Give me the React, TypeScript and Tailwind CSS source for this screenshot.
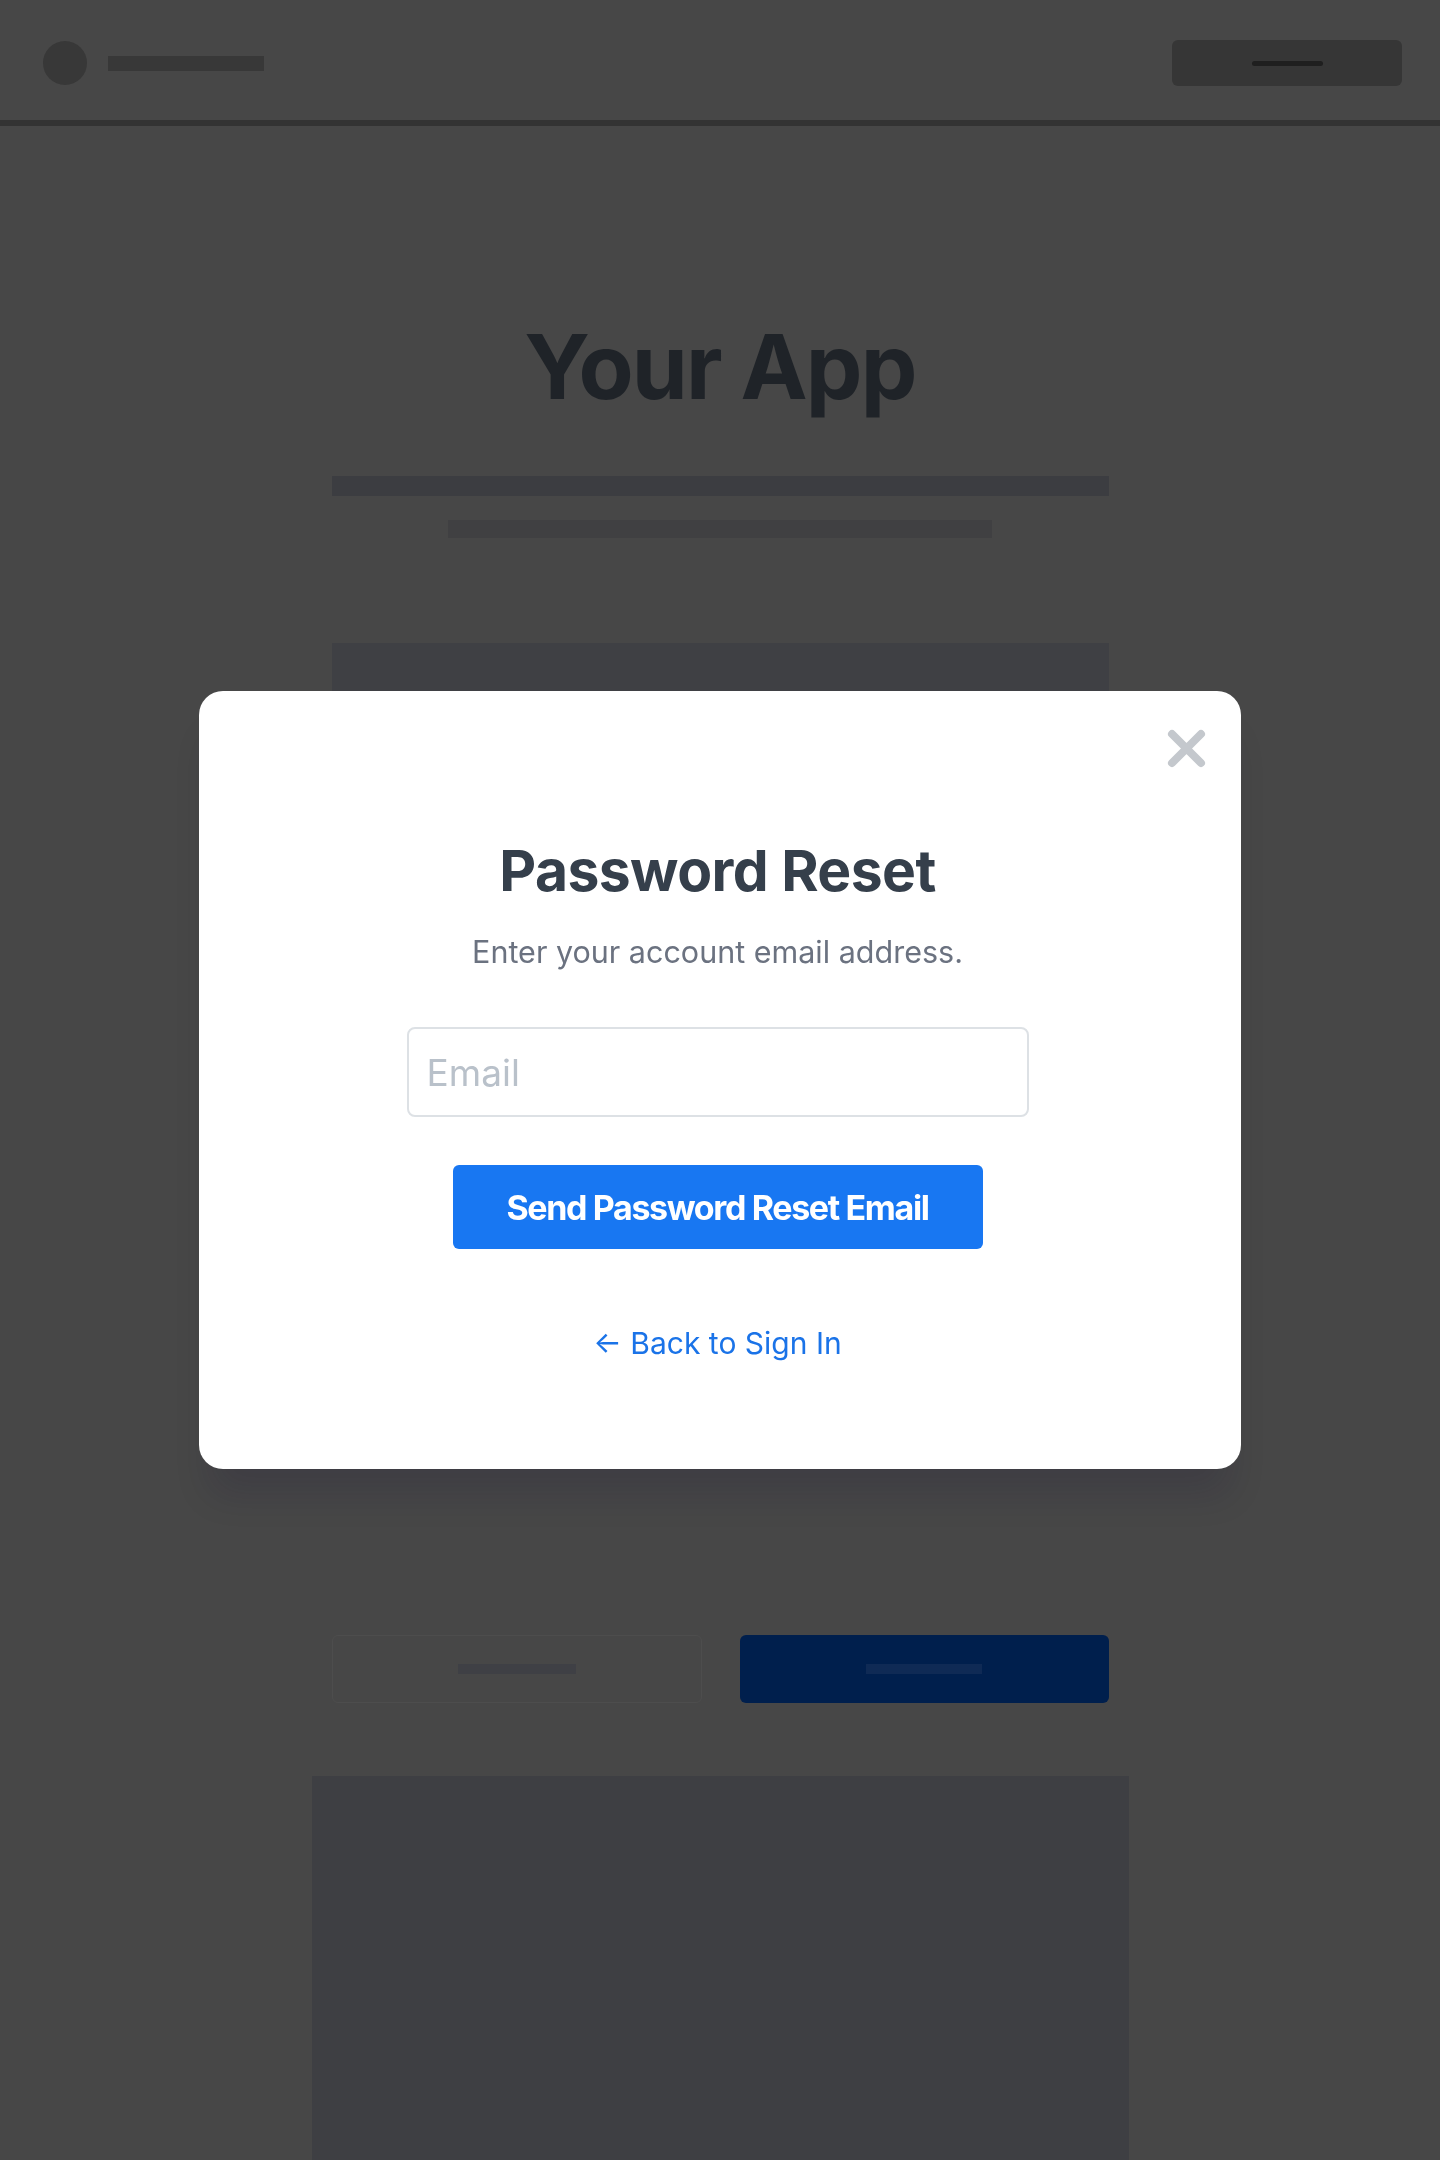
import React from "react";

function Header() {
  return (
    <header className="h-[126px] border-b-[6px] border-[#333333] flex items-center justify-between pt-[6px] pl-[43px] pr-[38px]">
      <div className="flex items-center gap-[21px]">
        <div className="w-[44px] h-[44px] rounded-full bg-[#383838]" />
        <div className="w-[156px] h-[15px] bg-[#383838]" />
      </div>
      <div className="w-[230px] h-[46px] rounded-[6px] bg-[#363636] flex items-center justify-center">
        <div className="w-[71px] h-[5px] rounded-full bg-[#1f1f1f]" />
      </div>
    </header>
  );
}

function Backdrop() {
  return (
    <main className="flex flex-col items-center">
      <h1 className="mt-[186px] text-[90px] leading-[110px] font-bold tracking-[-0.02em] text-[#1f2328]">
        Your App
      </h1>
      <div className="mt-[54px] w-[777px] h-[20px] bg-[#3c3d41]" />
      <div className="mt-[24px] w-[544px] h-[18px] bg-[#404042]" />
      <div className="mt-[105px] w-[777px] h-[817px] bg-[#3f4044]" />
      <div className="mt-[175px] w-[777px] flex gap-[38px]">
        <div className="flex-1 h-[68px] rounded-[6px] border border-[#4d4d4d] flex items-center justify-center">
          <div className="w-[118px] h-[10px] bg-[#3f4045]" />
        </div>
        <div className="flex-1 h-[68px] rounded-[6px] bg-[#001f4d] flex items-center justify-center">
          <div className="w-[116px] h-[10px] bg-[#0f2a55]" />
        </div>
      </div>
      <div className="mt-[73px] w-[817px] h-[420px] bg-[#3e3f43]" />
    </main>
  );
}

function ResetModal() {
  return (
    <div className="fixed inset-0 flex items-center justify-center">
      <div className="relative w-[1042px] h-[778px] bg-white rounded-[24px] shadow-[0_36px_36px_-12px_rgba(20,10,50,0.16)] flex flex-col items-center pt-[146px] pr-[5px]">
        <button className="absolute top-[38px] right-[35px] w-[39px] h-[39px]" aria-label="Close">
          <svg viewBox="0 0 39 39" className="w-full h-full">
            <path d="M5 5 L34 34 M34 5 L5 34" stroke="#c4c8cd" strokeWidth="8" strokeLinecap="round" />
          </svg>
        </button>
        <h2 className="text-[57px] leading-[67px] font-bold text-[#353f4b] tracking-[-0.01em]">Password Reset</h2>
        <p className="mt-[30px] text-[30.5px] leading-[36px] text-[#6b7280]">Enter your account email address.</p>
        <input
          type="email"
          placeholder="Email"
          className="mt-[57px] w-[622px] h-[90px] rounded-[8px] border-2 border-[#dde1e5] px-[18px] text-[37px] text-[#374151] placeholder:text-[#b9c1ca] outline-none"
        />
        <button className="mt-[48px] w-[530px] h-[84px] rounded-[6px] bg-[#1877f2] text-white text-[34px] font-bold tracking-[-0.04em]">
          Send Password Reset Email
        </button>
        <a href="#" className="mt-[76px] text-[30px] leading-[36px] text-[#1a73e8]">
          ← Back to Sign In
        </a>
      </div>
    </div>
  );
}

export default function App() {
  return (
    <div className="relative min-h-[2160px] bg-[#474747] overflow-hidden" style={{ fontFamily: "Inter, 'Noto Sans', sans-serif" }}>
      <Header />
      <Backdrop />
      <ResetModal />
    </div>
  );
}
